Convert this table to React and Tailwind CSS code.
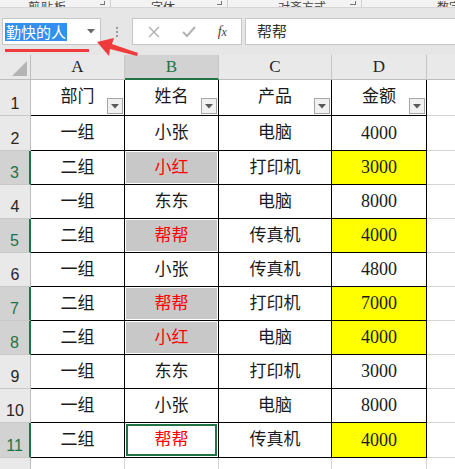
import React from 'react';

const COLS = [
  { key: 'A', w: 'w-[94px]' },
  { key: 'B', w: 'w-[94px]' },
  { key: 'C', w: 'w-[113px]' },
  { key: 'D', w: 'w-[95px]' },
];

const HEAD = ['部门', '姓名', '产品', '金额'];

const ROWS = [
  ['一组', '小张', '电脑', '4000'],
  ['二组', '小红', '打印机', '3000'],
  ['一组', '东东', '电脑', '8000'],
  ['二组', '帮帮', '传真机', '4000'],
  ['一组', '小张', '传真机', '4800'],
  ['二组', '帮帮', '打印机', '7000'],
  ['二组', '小红', '电脑', '4000'],
  ['一组', '东东', '打印机', '3000'],
  ['一组', '小张', '电脑', '8000'],
  ['二组', '帮帮', '传真机', '4000'],
];

// row heights for rows 2..11
const HEIGHTS = ['h-[35px]', 'h-[34px]', 'h-[34px]', 'h-[34px]', 'h-[34px]', 'h-[34px]', 'h-[34px]', 'h-[34px]', 'h-[34px]', 'h-[35px]'];

const SELECTED = [3, 5, 7, 8, 11];
const ACTIVE = 11;

const cjk = "font-['Liberation_Serif','Noto_Sans_CJK_SC',serif]";
const green = '#217346';

const FilterButton = () => (
  <div className="absolute right-[1px] bottom-[1px] w-[16px] h-[16px] border border-[#a6a6a6] bg-[#f1f1f1] flex items-center justify-center">
    <svg width="8" height="5" viewBox="0 0 8 5">
      <polygon points="0,0 8,0 4,4.5" fill="#595959" />
    </svg>
  </div>
);

const RowHeader = ({ n, h }) => {
  const sel = SELECTED.includes(n);
  return (
    <div
      className={`w-[31px] ${h} shrink-0 flex items-end justify-center pb-[1px] border-b border-[#c8c8c8] font-['Liberation_Sans',sans-serif] text-[16px] leading-[20px] ${
        sel ? 'bg-[#d2d2d2] text-[#217346] border-r-2 border-r-[#217346]' : 'bg-[#e9e9e9] text-[#262626] border-r border-r-[#bdbdbd]'
      }`}
    >
      {n}
    </div>
  );
};

const TopStrip = () => (
  <div className="h-[8px] bg-[#f3f3f3] border-b border-[#d6d6d6] flex overflow-hidden text-[12px] text-[#444] font-['Noto_Sans_CJK_SC',sans-serif]">
    <div className="w-[111px] h-full border-r border-[#cfcfcf] flex items-end justify-between pr-[5px]">
      <span className="ml-[28px] leading-[12px] -mb-[6px] tracking-[1px]">剪贴板</span>
      <span className="w-[5px] h-[4px] border-r border-b border-[#777] mb-[2px]" />
    </div>
    <div className="w-[117px] h-full border-r border-[#cfcfcf] flex items-end justify-between pr-[5px]">
      <span className="ml-[40px] leading-[12px] -mb-[6px]">字体</span>
      <span className="w-[5px] h-[4px] border-r border-b border-[#777] mb-[2px]" />
    </div>
    <div className="w-[134px] h-full border-r border-[#cfcfcf] flex items-end justify-between pr-[5px]">
      <span className="ml-[50px] leading-[12px] -mb-[6px]">对齐方式</span>
      <span className="w-[6px] h-[4px] border-r border-b border-[#777] mb-[2px]" />
    </div>
    <div className="flex-1 h-full flex items-end justify-end">
      <span className="leading-[12px] -mb-[6px] -mr-[6px]">数字</span>
    </div>
  </div>
);

const FormulaBar = () => (
  <div className="relative h-[47px] bg-[#e6e6e6] flex items-start pt-[10px]">
    <div className="ml-[2px] w-[99px] h-[27px] bg-white border border-[#c6c6c6] flex items-center justify-between pl-[2px] pr-[5px]">
      <span className="bg-[#3390f0] text-white text-[15px] leading-[18px] font-['Noto_Sans_CJK_SC',sans-serif] px-[1px]">勤快的人</span>
      <svg width="8" height="5" viewBox="0 0 8 5">
        <polygon points="0,0 8,0 4,4.5" fill="#6a6a6a" />
      </svg>
    </div>
    <div className="w-[31px] h-[27px] flex flex-col items-center justify-center gap-[2px]">
      <span className="w-[2px] h-[2px] bg-[#9a9a9a]" />
      <span className="w-[2px] h-[2px] bg-[#9a9a9a]" />
      <span className="w-[2px] h-[2px] bg-[#9a9a9a]" />
    </div>
    <div className="w-[110px] h-[27px] bg-white border border-[#c6c6c6] flex items-center justify-around px-[4px]">
      <svg width="14" height="14" viewBox="0 0 14 14">
        <path d="M2 2 L12 12 M12 2 L2 12" stroke="#b3b3b3" strokeWidth="1.5" />
      </svg>
      <svg width="16" height="14" viewBox="0 0 16 14">
        <path d="M2 7 L6 11 L14 2" stroke="#b3b3b3" strokeWidth="2" fill="none" />
      </svg>
      <span className="font-['Liberation_Serif',serif] italic text-[14px] text-[#444] leading-none">
        f<span className="text-[12px]">x</span>
      </span>
    </div>
    <div className="ml-[3px] flex-1 h-[27px] bg-white border border-[#c6c6c6] border-r-0 flex items-center pl-[11px]">
      <span className="text-[15px] text-[#333] font-['Noto_Sans_CJK_SC',sans-serif]">帮帮</span>
    </div>

    {/* annotation */}
    <div className="absolute left-[5px] top-[41px] w-[84px] h-[3px] bg-[#ef3b3b]" />
    <svg className="absolute left-[95px] top-[28px]" width="45" height="22" viewBox="95 36 45 22">
      <polygon points="97,42 114,38 112,44 138,53 137,56 110,49 109,56" fill="#ef3b3b" />
    </svg>
  </div>
);

const ColumnHeader = () => (
  <div className="flex h-[25px] bg-[#e9e9e9] font-['Liberation_Serif',serif] text-[17px]">
    <div className="w-[31px] shrink-0 border-r border-b border-[#bdbdbd] flex items-end justify-end pr-[3px] pb-[3px]">
      <svg width="15" height="15" viewBox="0 0 15 15">
        <polygon points="15,0 15,15 0,15" fill="#b4b4b4" />
      </svg>
    </div>
    {COLS.map((c) => (
      <div
        key={c.key}
        className={`${c.w} shrink-0 flex items-center justify-center border-r border-[#c6c6c6] ${
          c.key === 'B' ? 'bg-[#d2d2d2] text-[#217346] border-b-2 border-b-[#217346]' : 'text-[#262626] border-b border-b-[#bdbdbd]'
        }`}
      >
        {c.key}
      </div>
    ))}
    <div className="flex-1 border-b border-[#bdbdbd]" />
  </div>
);

const HeaderRow = () => (
  <div className="flex h-[36px]">
    <RowHeader n={1} h="h-[36px]" />
    {HEAD.map((t, i) => (
      <div
        key={t}
        className={`${COLS[i].w} shrink-0 relative border-r border-b border-black flex items-center justify-center ${cjk} text-[17px] text-[#1a1a1a]`}
      >
        <span className="-mt-[1px]">{t}</span>
        <FilterButton />
      </div>
    ))}
    <div className="flex-1 border-b border-[#d4d4d4]" />
  </div>
);

const DataRow = ({ n, data, h }) => {
  const sel = SELECTED.includes(n);
  const active = n === ACTIVE;
  return (
    <div className={`flex ${h}`}>
      <RowHeader n={n} h={h} />
      {data.map((t, i) => {
        const base = `${COLS[i].w} shrink-0 border-r border-b border-black ${cjk} text-[#1a1a1a]`;
        if (i === 1 && sel) {
          return (
            <div key={i} className={`${base} p-[1px]`}>
              <div
                className={`w-full h-full flex items-center justify-center text-[17px] text-[#ff0000] ${
                  active ? 'bg-white border-2 border-[#217346]' : 'bg-[#c8c8c8]'
                }`}
              >
                {t}
              </div>
            </div>
          );
        }
        if (i === 3) {
          return (
            <div
              key={i}
              className={`${base} flex items-center justify-center text-[18px] ${sel ? 'bg-[#ffff00]' : ''}`}
            >
              {t}
            </div>
          );
        }
        return (
          <div key={i} className={`${base} flex items-center justify-center text-[17px]`}>
            {t}
          </div>
        );
      })}
      <div className="flex-1 border-b border-[#d4d4d4]" />
    </div>
  );
};

const App = () => {
  return (
    <div className="w-[455px] h-[469px] overflow-hidden bg-white">
      <TopStrip />
      <FormulaBar />
      <ColumnHeader />
      <HeaderRow />
      {ROWS.map((r, i) => (
        <DataRow key={i} n={i + 2} data={r} h={HEIGHTS[i]} />
      ))}
      <div className="flex h-[20px]">
        <div className="w-[31px] shrink-0 bg-[#e9e9e9] border-r border-[#bdbdbd]" />
        {COLS.map((c) => (
          <div key={c.key} className={`${c.w} shrink-0 border-r border-[#d4d4d4]`} />
        ))}
      </div>
    </div>
  );
};

export default App;
